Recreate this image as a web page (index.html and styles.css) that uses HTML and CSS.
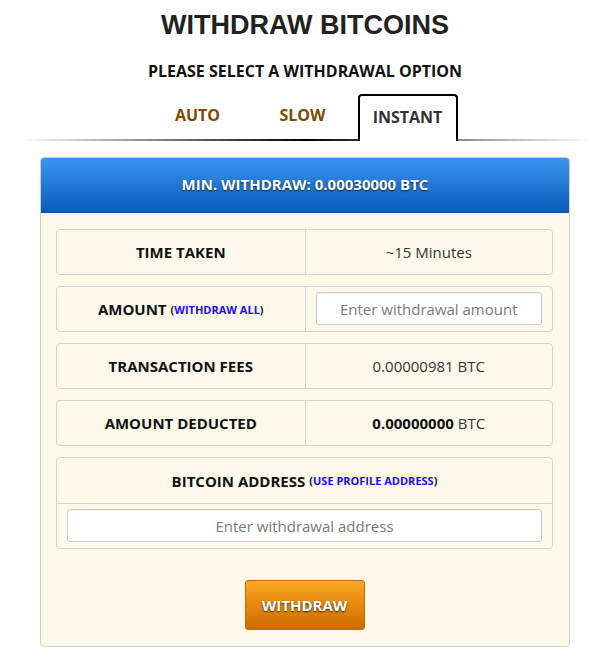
FILE: index.html
```html
<!DOCTYPE html>
<html lang="en">
<head>
<meta charset="utf-8">
<title>Withdraw Bitcoins</title>
<link rel="stylesheet" href="styles.css">
</head>
<body>
<div class="page">
  <h1 class="title">WITHDRAW BITCOINS</h1>
  <h2 class="subtitle">PLEASE SELECT A WITHDRAWAL OPTION</h2>
  <div class="tabs">
    <div class="tab">AUTO</div>
    <div class="tab">SLOW</div>
    <div class="tab active">INSTANT</div>
  </div>
  <div class="tab-line"></div>

  <div class="panel">
    <div class="panel-head">MIN. WITHDRAW: 0.00030000 BTC</div>
    <div class="panel-body">
      <div class="row">
        <div class="cell label">TIME TAKEN</div>
        <div class="cell value">~15 Minutes</div>
      </div>
      <div class="row">
        <div class="cell label">AMOUNT <span class="paren">(<span class="link">WITHDRAW ALL</span>)</span></div>
        <div class="cell value input-cell"><input class="field" type="text" placeholder="Enter withdrawal amount"></div>
      </div>
      <div class="row">
        <div class="cell label">TRANSACTION FEES</div>
        <div class="cell value">0.00000981 BTC</div>
      </div>
      <div class="row">
        <div class="cell label">AMOUNT DEDUCTED</div>
        <div class="cell value"><b>0.00000000</b>&nbsp;BTC</div>
      </div>
      <div class="address-box">
        <div class="address-head label">BITCOIN ADDRESS <span class="paren">(<span class="link">USE PROFILE ADDRESS</span>)</span></div>
        <div class="address-input"><input class="field" type="text" placeholder="Enter withdrawal address"></div>
      </div>
      <div class="actions">
        <button class="btn" type="button">WITHDRAW</button>
      </div>
    </div>
  </div>
</div>
</body>
</html>
```

FILE: styles.css
```css
* { box-sizing: border-box; }
html, body { margin: 0; padding: 0; background: #fff; }
body { font-family: "Open Sans", "Noto Sans", sans-serif; color: #222; }

.page { width: 610px; padding-top: 9px; }

.title {
  margin: 0;
  font-family: "Liberation Sans", Arial, sans-serif;
  font-weight: 700;
  font-size: 27px;
  line-height: 32px;
  text-align: center;
  color: #222;
}

.subtitle {
  margin: 19px 0 0;
  font-size: 16px;
  line-height: 22px;
  font-weight: 700;
  text-align: center;
  color: #111;
}

.tabs {
  display: flex;
  justify-content: center;
  margin-top: 12px;
  height: 45px;
}
.tab {
  width: 100px;
  height: 45px;
  margin-right: 5px;
  border: 2px solid transparent;
  border-bottom: 0;
  padding-top: 8px;
  text-align: center;
  font-size: 16px;
  line-height: 22px;
  font-weight: 700;
  color: #7d4a00;
}
.tab.active {
  position: relative;
  z-index: 1;
  height: 47px;
  padding-top: 10px;
  border-color: #000;
  border-radius: 4px 4px 0 0;
  background: #fff;
  color: #333;
}
.tab-line {
  height: 2px;
  margin: 0 20px;
  background: linear-gradient(to right, rgba(0,0,0,0), #000 50%, rgba(0,0,0,0));
}

.panel {
  width: 530px;
  margin: 16px auto 0;
  border: 1px solid #cfcfcf;
  border-radius: 4px;
  background: #fcf9eb;
  overflow: hidden;
}
.panel-head {
  height: 56px;
  margin: -1px -1px 0;
  background: linear-gradient(#3a96f0, #0a5cba);
  border-bottom: 1px solid #0a56ad;
  color: #fff;
  font-weight: 700;
  font-size: 15px;
  line-height: 55px;
  text-align: center;
  text-shadow: 0 1px 2px rgba(0,0,0,.75);
}
.panel-body {
  padding: 16px 16px 16px 15px;
}

.row {
  display: grid;
  grid-template-columns: 1fr 1fr;
  height: 46px;
  margin-bottom: 11px;
  border: 1px solid #d2d2d2;
  border-radius: 4px;
}
.cell {
  display: flex;
  align-items: center;
  justify-content: center;
}
.cell.value {
  border-left: 1px solid #d2d2d2;
  font-size: 15px;
  color: #333;
}
.cell.value b { color: #111; }
.label {
  font-weight: 700;
  font-size: 15px;
  color: #111;
}
.paren {
  margin-left: 4px;
  font-size: 11px;
  color: #222;
}
.link { color: #1a0cff; }

.input-cell { padding: 5px 10px 6px; }
.field {
  width: 100%;
  height: 33px;
  border: 1px solid #cccccc;
  border-radius: 3px;
  background: #fff;
  font-family: "Open Sans", "Noto Sans", sans-serif;
  font-size: 15px;
  text-align: center;
  color: #333;
  box-shadow: inset 0 1px 1px rgba(0,0,0,.05);
}
.field::placeholder { color: #7a7a7a; }

.address-box {
  border: 1px solid #d2d2d2;
  border-radius: 4px;
}
.address-head {
  height: 46px;
  display: flex;
  align-items: center;
  justify-content: center;
  border-bottom: 1px solid #d2d2d2;
}
.address-input { padding: 5px 10px 6px; }

.actions {
  display: flex;
  justify-content: center;
  padding-top: 31px;
}
.btn {
  width: 120px;
  height: 50px;
  border: 1px solid #c46a00;
  border-radius: 3px;
  background: linear-gradient(#fca621, #cc6c00);
  color: #fff;
  font-family: "Open Sans", "Noto Sans", sans-serif;
  font-weight: 700;
  font-size: 15px;
  text-shadow: 0 1px 2px rgba(0,0,0,.8);
  cursor: pointer;
}
```
